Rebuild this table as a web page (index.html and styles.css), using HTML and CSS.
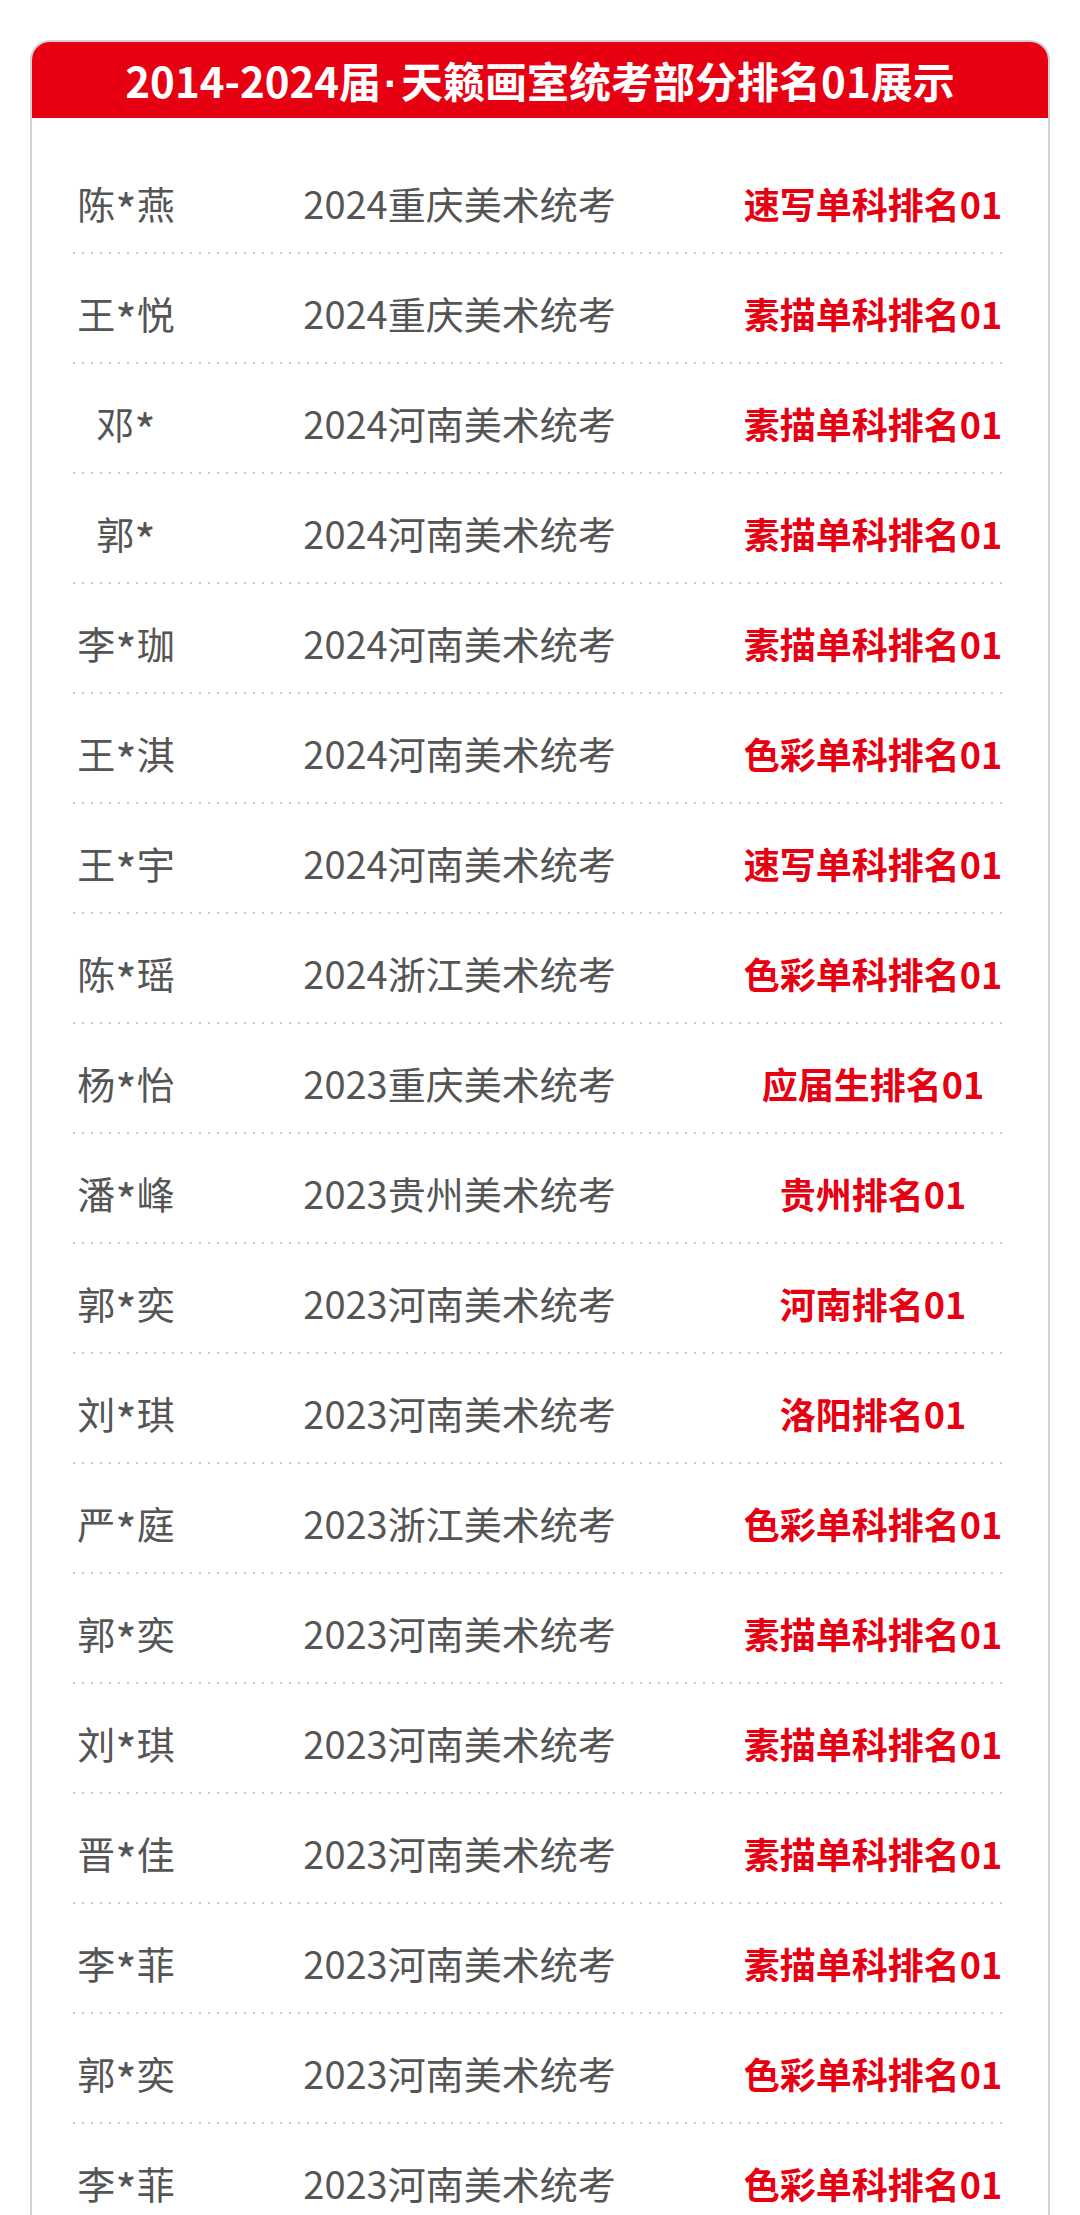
FILE: index.html
```html
<!DOCTYPE html>
<html lang="zh-CN">
<head>
<meta charset="utf-8">
<title>天籁画室统考部分排名01展示</title>
<link rel="stylesheet" href="styles.css">
</head>
<body>
<div class="card">
  <div class="card-head">2014-2024届<span class="dot">·</span>天籁画室统考部分排名01展示</div>
  <div class="list">
    <div class="row"><span class="name">陈<span class="star">*</span>燕</span><span class="exam">2024重庆美术统考</span><span class="rank">速写单科排名01</span></div>
    <div class="row"><span class="name">王<span class="star">*</span>悦</span><span class="exam">2024重庆美术统考</span><span class="rank">素描单科排名01</span></div>
    <div class="row"><span class="name">邓<span class="star">*</span></span><span class="exam">2024河南美术统考</span><span class="rank">素描单科排名01</span></div>
    <div class="row"><span class="name">郭<span class="star">*</span></span><span class="exam">2024河南美术统考</span><span class="rank">素描单科排名01</span></div>
    <div class="row"><span class="name">李<span class="star">*</span>珈</span><span class="exam">2024河南美术统考</span><span class="rank">素描单科排名01</span></div>
    <div class="row"><span class="name">王<span class="star">*</span>淇</span><span class="exam">2024河南美术统考</span><span class="rank">色彩单科排名01</span></div>
    <div class="row"><span class="name">王<span class="star">*</span>宇</span><span class="exam">2024河南美术统考</span><span class="rank">速写单科排名01</span></div>
    <div class="row"><span class="name">陈<span class="star">*</span>瑶</span><span class="exam">2024浙江美术统考</span><span class="rank">色彩单科排名01</span></div>
    <div class="row"><span class="name">杨<span class="star">*</span>怡</span><span class="exam">2023重庆美术统考</span><span class="rank">应届生排名01</span></div>
    <div class="row"><span class="name">潘<span class="star">*</span>峰</span><span class="exam">2023贵州美术统考</span><span class="rank">贵州排名01</span></div>
    <div class="row"><span class="name">郭<span class="star">*</span>奕</span><span class="exam">2023河南美术统考</span><span class="rank">河南排名01</span></div>
    <div class="row"><span class="name">刘<span class="star">*</span>琪</span><span class="exam">2023河南美术统考</span><span class="rank">洛阳排名01</span></div>
    <div class="row"><span class="name">严<span class="star">*</span>庭</span><span class="exam">2023浙江美术统考</span><span class="rank">色彩单科排名01</span></div>
    <div class="row"><span class="name">郭<span class="star">*</span>奕</span><span class="exam">2023河南美术统考</span><span class="rank">素描单科排名01</span></div>
    <div class="row"><span class="name">刘<span class="star">*</span>琪</span><span class="exam">2023河南美术统考</span><span class="rank">素描单科排名01</span></div>
    <div class="row"><span class="name">晋<span class="star">*</span>佳</span><span class="exam">2023河南美术统考</span><span class="rank">素描单科排名01</span></div>
    <div class="row"><span class="name">李<span class="star">*</span>菲</span><span class="exam">2023河南美术统考</span><span class="rank">素描单科排名01</span></div>
    <div class="row"><span class="name">郭<span class="star">*</span>奕</span><span class="exam">2023河南美术统考</span><span class="rank">色彩单科排名01</span></div>
    <div class="row"><span class="name">李<span class="star">*</span>菲</span><span class="exam">2023河南美术统考</span><span class="rank">色彩单科排名01</span></div>
  </div>
</div>
</body>
</html>
```

FILE: styles.css
```css
html, body {
  margin: 0;
  padding: 0;
  background: #ffffff;
}

body {
  font-family: "Noto Sans CJK SC", "Noto Sans", sans-serif;
  padding-top: 40px;
}

.card {
  margin: 0 30px;
  border: 2px solid #d2d2d2;
  border-bottom: none;
  border-radius: 20px 20px 0 0;
  overflow: hidden;
  background: #ffffff;
}

.card-head {
  height: 76px;
  background: #e60012;
  color: #ffffff;
  font-size: 42px;
  font-weight: 700;
  line-height: 76px;
  text-align: center;
  white-space: nowrap;
}

.dot {
  font-family: "Liberation Sans", sans-serif;
  padding: 0 3px;
}

.list {
  padding: 26px 42px 0 41px;
}

.row {
  display: grid;
  grid-template-columns: 106px 1fr 266px;
  align-items: center;
  height: 110px;
  box-sizing: border-box;
  padding: 40px 0 32px;
  line-height: 38px;
  background-image: linear-gradient(to right, #c9c9c9 2.5px, transparent 2.5px);
  background-size: 9px 2px;
  background-repeat: repeat-x;
  background-position: left bottom;
}

.row > span {
  text-align: center;
  white-space: nowrap;
}

.name,
.exam {
  font-size: 38px;
  color: #555555;
  font-weight: 400;
}

.star {
  font-size: 46px;
  line-height: 0;
  vertical-align: -0.22em;
}

.rank {
  font-size: 36px;
  color: #e60012;
  font-weight: 700;
}
```
